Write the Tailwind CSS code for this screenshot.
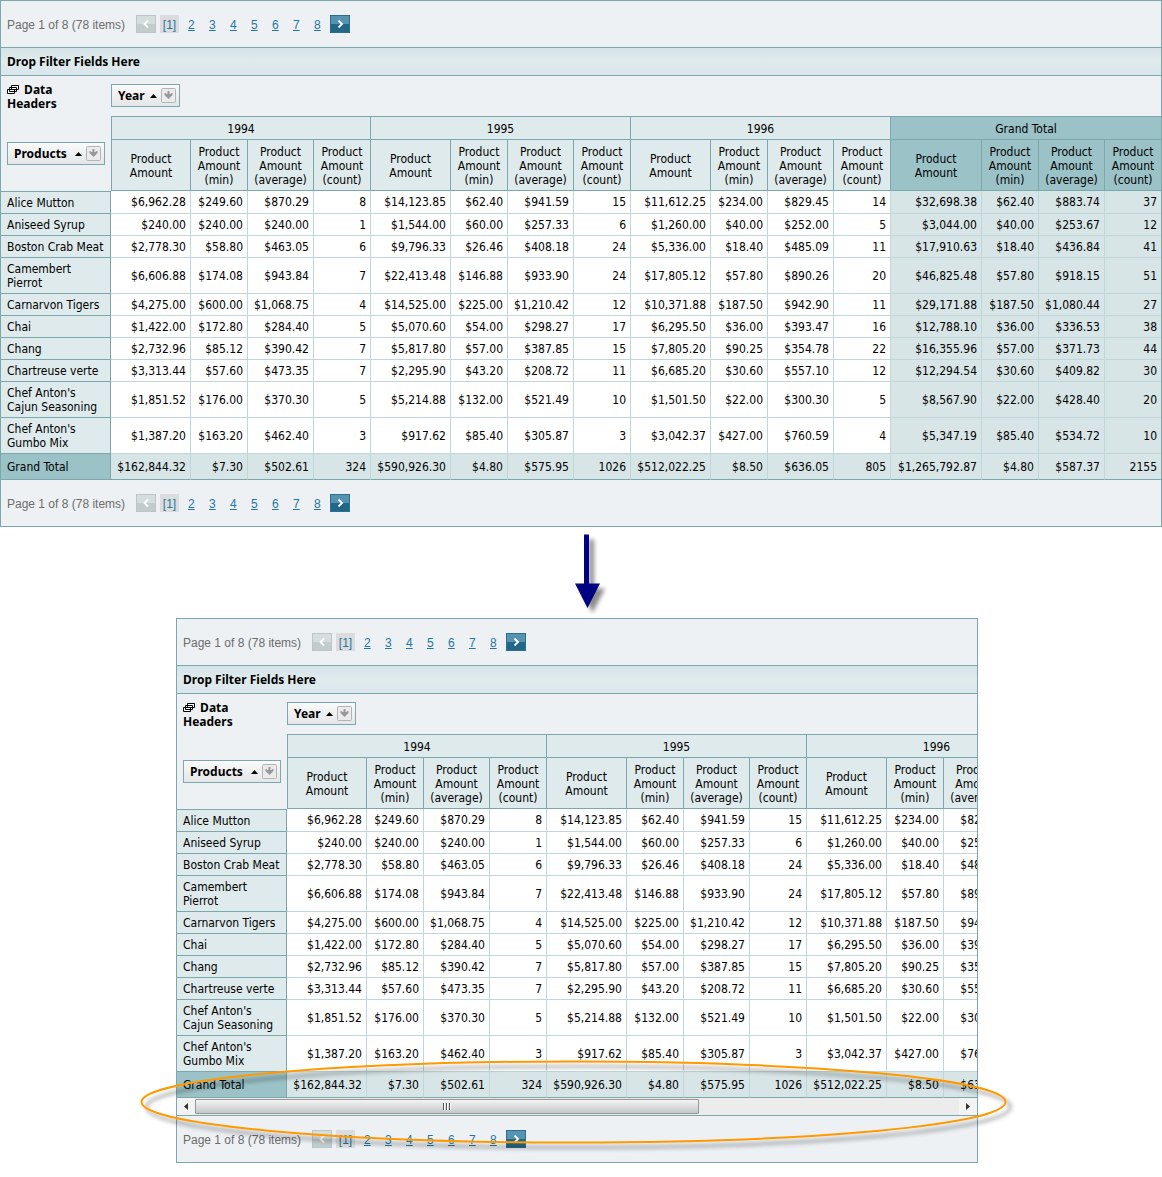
<!DOCTYPE html>
<html lang="en">
<head>
    <meta charset="UTF-8">
    <meta name="viewport" content="width=device-width, initial-scale=1.0">
    <title>Pivot Grid - Horizontal Scrolling</title>
    <script src="https://cdn.jsdelivr.net/npm/@tailwindcss/browser@4"></script>
</head>
<body class="bg-white text-black text-[12px] leading-[14px] font-['DejaVu_Sans_Condensed','DejaVu_Sans',sans-serif]">
    <!-- Full width grid -->
    <section class="pivot border border-[#7aa8ad] bg-[#edf1f4]"></section>

    <!-- Arrow between the two grids -->
    <div class="h-[91px] pl-[570px]">
        <svg class="h-[91px] w-[50px]" viewBox="570 527 50 91">
            <defs>
                <filter id="arrowShadow" x="-50%" y="-20%" width="200%" height="140%">
                    <feDropShadow dx="5" dy="5" stdDeviation="2" flood-color="#000" flood-opacity="0.45" />
                </filter>
            </defs>
            <path d="M584 534.5h5v49h11l-12.5 24.5-12.5-24.5h9z" fill="#000080" filter="url(#arrowShadow)" />
        </svg>
    </div>

    <!-- Narrow grid with a scroll bar -->
    <div class="relative ml-44 mb-[14px] max-w-[802px]">
        <section class="pivot scrollable border border-[#7aa8ad] bg-[#edf1f4]"></section>
        <svg class="absolute -left-[46px] bottom-0 h-[113px] w-[900px] pointer-events-none" viewBox="130 1050 900 113">
            <defs>
                <filter id="ringShadow" x="-5%" y="-20%" width="110%" height="150%">
                    <feDropShadow dx="5" dy="5" stdDeviation="2" flood-color="#000" flood-opacity="0.45" />
                </filter>
            </defs>
            <ellipse cx="573.5" cy="1102" rx="432" ry="40.5" fill="none" stroke="#ff9900" stroke-width="2" filter="url(#ringShadow)" />
        </svg>
    </div>

    <template id="pagerTemplate">
        <nav class="flex h-[46px] items-center pl-1.5 font-['Liberation_Sans',Arial,sans-serif] text-[#1f76a3]">
            <span class="w-[129px] pt-0.5 text-[#6c6c6c]">Page 1 of 8 (78 items)</span>
            <button class="flex h-[18px] w-5 items-center justify-center border border-[#bcc6c7] bg-linear-to-b from-[#d6dddd] from-50% to-[#c3cccd] to-50%" aria-label="Previous page">
                <svg class="h-2 w-2" viewBox="0 0 8 8" fill="none" stroke="#fff" stroke-width="1.8"><path d="M6 0.5L2.5 4 6 7.5" /></svg>
            </button>
            <b class="ml-1 flex h-[18px] w-[19px] items-center justify-center bg-[#dcdcdc] pt-0.5 font-normal">[1]</b>
            <div class="pages ml-[9px] flex gap-[14px] pt-0.5"></div>
            <button class="ml-[9px] flex h-[18px] w-5 items-center justify-center border border-[#2b7090] bg-linear-to-b from-[#5593b0] from-50% to-[#246685] to-50%" aria-label="Next page">
                <svg class="h-2 w-2" viewBox="0 0 8 8" fill="none" stroke="#fff" stroke-width="1.8"><path d="M2.5 0.5L6 4 2.5 7.5" /></svg>
            </button>
        </nav>
    </template>

    <template id="gridTemplate">
        <div class="border-y border-[#7aa8ad] bg-linear-to-b from-[#d5e3e8] via-[#e0ebec] to-[#d9e6ec] px-1.5 py-[6px] font-bold leading-[15px] font-['Noto_Sans',sans-serif]">Drop Filter Fields Here</div>
        <div class="overflow-hidden">
            <table class="w-full min-w-[1160px] table-fixed border-separate border-spacing-0">
                <colgroup>
                    <col class="w-[110px]">
                    <col class="w-[80px]"><col class="w-[57px]"><col class="w-[66px]"><col class="w-[57px]">
                    <col class="w-[80px]"><col class="w-[57px]"><col class="w-[66px]"><col class="w-[57px]">
                    <col class="w-[80px]"><col class="w-[57px]"><col class="w-[66px]"><col class="w-[57px]">
                    <col class="w-[91px]"><col class="w-[57px]"><col class="w-[66px]"><col>
                </colgroup>
                <thead>
                    <tr>
                        <td rowspan="3" class="h-[115px] px-1.5 align-top font-['Noto_Sans',sans-serif] font-bold">
                            <div class="flex h-[115px] flex-col items-start justify-between pt-[7px] pb-[26px]">
                                <div>
                                    <svg class="mr-0.5 inline h-[9px] w-3 align-baseline" viewBox="0 0 12 9" fill="#fff" stroke="#000"><path d="M4.5 0.5h7v4h-7zM2.5 2.5h7v4h-7zM0.5 4.5h7v4h-7z" /></svg>
                                    Data<br>Headers
                                </div>
                                <button class="flex h-[23px] w-full items-center border border-[#7aa8ad] bg-linear-to-b from-[#fafafa] to-[#e4e6e7] pl-1.5 pr-[3px]">
                                    Products
                                    <svg class="ml-auto h-1 w-[7px]" viewBox="0 0 7 4"><path d="M0 4L3.5 0 7 4z" /></svg>
                                    <svg class="ml-1 h-[15px] w-[15px]" viewBox="0 0 15 15"><rect x="0.5" y="0.5" width="14" height="14" rx="1" fill="#ebebec" stroke="#b4b4b8" /><path d="M6.5 3h2v3h1l1-1h1v2l-4 4-4-4V5h1l1 1h1z" fill="#97979c" /></svg>
                                </button>
                            </div>
                        </td>
                        <td colspan="16" class="h-10 p-0 pb-px font-['Noto_Sans',sans-serif] font-bold">
                            <button class="flex h-[23px] items-center border border-[#7aa8ad] bg-linear-to-b from-[#fafafa] to-[#e4e6e7] pl-1.5 pr-[3px]">
                                Year
                                <svg class="ml-[5px] h-1 w-[7px]" viewBox="0 0 7 4"><path d="M0 4L3.5 0 7 4z" /></svg>
                                <svg class="ml-1 h-[15px] w-[15px]" viewBox="0 0 15 15"><rect x="0.5" y="0.5" width="14" height="14" rx="1" fill="#ebebec" stroke="#b4b4b8" /><path d="M6.5 3h2v3h1l1-1h1v2l-4 4-4-4V5h1l1 1h1z" fill="#97979c" /></svg>
                            </button>
                        </td>
                    </tr>
                    <tr class="years h-6"></tr>
                    <tr class="measures h-[51px]"></tr>
                </thead>
                <tbody></tbody>
            </table>
        </div>
    </template>

    <template id="scrollTemplate">
        <div class="flex h-[17px] items-center bg-[#ececed]">
            <button class="flex h-full w-[18px] items-center justify-center bg-[#f3f3f3]" aria-label="Scroll left">
                <svg class="h-[7px] w-1" viewBox="0 0 4 7"><path d="M4 0v7L0 3.5z" fill="#333" /></svg>
            </button>
            <div class="h-[15px] flex-1">
                <div class="flex h-[15px] w-[66%] items-center justify-center gap-px rounded-[1px] border border-[#97979a] bg-linear-to-b from-[#f4f4f4] to-[#c6c7c9]">
                    <i class="h-[7px] w-0.5 border-l border-[#555] bg-white"></i>
                    <i class="h-[7px] w-0.5 border-l border-[#555] bg-white"></i>
                    <i class="h-[7px] w-0.5 border-l border-[#555] bg-white"></i>
                </div>
            </div>
            <button class="flex h-full w-[18px] items-center justify-center bg-[#f3f3f3]" aria-label="Scroll right">
                <svg class="h-[7px] w-1" viewBox="0 0 4 7"><path d="M0 0v7l4-3.5z" fill="#333" /></svg>
            </button>
        </div>
    </template>

    <script>
        const years = ['1994', '1995', '1996', 'Grand Total'];
        const measures = ['Product Amount', 'Product Amount (min)', 'Product Amount (average)', 'Product Amount (count)'];
        const rows = [
            ['Alice Mutton', '$6,962.28 $249.60 $870.29 8 $14,123.85 $62.40 $941.59 15 $11,612.25 $234.00 $829.45 14 $32,698.38 $62.40 $883.74 37'],
            ['Aniseed Syrup', '$240.00 $240.00 $240.00 1 $1,544.00 $60.00 $257.33 6 $1,260.00 $40.00 $252.00 5 $3,044.00 $40.00 $253.67 12'],
            ['Boston Crab Meat', '$2,778.30 $58.80 $463.05 6 $9,796.33 $26.46 $408.18 24 $5,336.00 $18.40 $485.09 11 $17,910.63 $18.40 $436.84 41'],
            ['Camembert<br>Pierrot', '$6,606.88 $174.08 $943.84 7 $22,413.48 $146.88 $933.90 24 $17,805.12 $57.80 $890.26 20 $46,825.48 $57.80 $918.15 51'],
            ['Carnarvon Tigers', '$4,275.00 $600.00 $1,068.75 4 $14,525.00 $225.00 $1,210.42 12 $10,371.88 $187.50 $942.90 11 $29,171.88 $187.50 $1,080.44 27'],
            ['Chai', '$1,422.00 $172.80 $284.40 5 $5,070.60 $54.00 $298.27 17 $6,295.50 $36.00 $393.47 16 $12,788.10 $36.00 $336.53 38'],
            ['Chang', '$2,732.96 $85.12 $390.42 7 $5,817.80 $57.00 $387.85 15 $7,805.20 $90.25 $354.78 22 $16,355.96 $57.00 $371.73 44'],
            ['Chartreuse verte', '$3,313.44 $57.60 $473.35 7 $2,295.90 $43.20 $208.72 11 $6,685.20 $30.60 $557.10 12 $12,294.54 $30.60 $409.82 30'],
            ["Chef Anton's<br>Cajun Seasoning", '$1,851.52 $176.00 $370.30 5 $5,214.88 $132.00 $521.49 10 $1,501.50 $22.00 $300.30 5 $8,567.90 $22.00 $428.40 20'],
            ["Chef Anton's<br>Gumbo Mix", '$1,387.20 $163.20 $462.40 3 $917.62 $85.40 $305.87 3 $3,042.37 $427.00 $760.59 4 $5,347.19 $85.40 $534.72 10'],
            ['Grand Total', '$162,844.32 $7.30 $502.61 324 $590,926.30 $4.80 $575.95 1026 $512,022.25 $8.50 $636.05 805 $1,265,792.87 $4.80 $587.37 2155']
        ];

        const clone = id => document.getElementById(id).content.cloneNode(true);

        function pager() {
            const node = clone('pagerTemplate');
            for (let page = 2; page <= 8; page++) {
                node.querySelector('.pages').innerHTML += `<a href="#" class="w-[7px] underline">${page}</a>`;
            }
            return node;
        }

        function grid() {
            const node = clone('gridTemplate');
            // Header rows, the last group is the grand total
            node.querySelector('.years').innerHTML = years.map((year, i) =>
                `<th colspan="4" class="border-y border-[#7aa8ad] p-0 pt-px font-normal ${i == 0 ? 'border-l' : ''} ${i == 3 ? 'bg-[#9ac2c7]' : 'border-r bg-[#deeaeb]'}">${year}</th>`).join('');
            node.querySelector('.measures').innerHTML = years.map((year, i) => measures.map((name, j) =>
                `<th class="border-b border-[#7aa8ad] p-0 pt-0.5 font-normal ${i + j == 0 ? 'border-l' : ''} ${i == 3 && j == 3 ? '' : 'border-r'} ${i == 3 ? 'bg-[#9ac2c7]' : 'bg-[#deeaeb]'}"><span class="block px-1">${name}</span></th>`).join('')).join('');
            node.querySelector('tbody').innerHTML = rows.map(([name, values], r) => {
                const total = r == rows.length - 1;
                const head = `<th class="border-r border-b border-[#7aa8ad] px-1.5 text-left font-normal whitespace-nowrap ${r == 0 ? 'border-t' : ''} ${total ? 'py-[5px] h-[26px] bg-[#9ac2c7]' : 'pt-1 pb-[3px] bg-[#deeaeb]'}">${name}</th>`;
                return '<tr>' + head + values.split(' ').map((value, c) =>
                    `<td class="border-b p-0 pr-1 text-right ${c == 15 ? '' : 'border-r'} border-r-[#c1d6d9] ${total ? 'border-b-[#7aa8ad]' : 'border-b-[#c1d6d9]'} ${total || c > 11 ? 'bg-[#d7e5e6]' : 'bg-white'}">${value}</td>`).join('') + '</tr>';
            }).join('');
            return node;
        }

        document.querySelectorAll('.pivot').forEach(el => {
            el.append(pager(), grid());
            if (el.classList.contains('scrollable')) {
                el.append(clone('scrollTemplate'));
                el.lastElementChild.classList.add('border-b', 'border-[#7aa8ad]', 'box-content');
            }
            el.append(pager());
        });
    </script>
</body>
</html>
